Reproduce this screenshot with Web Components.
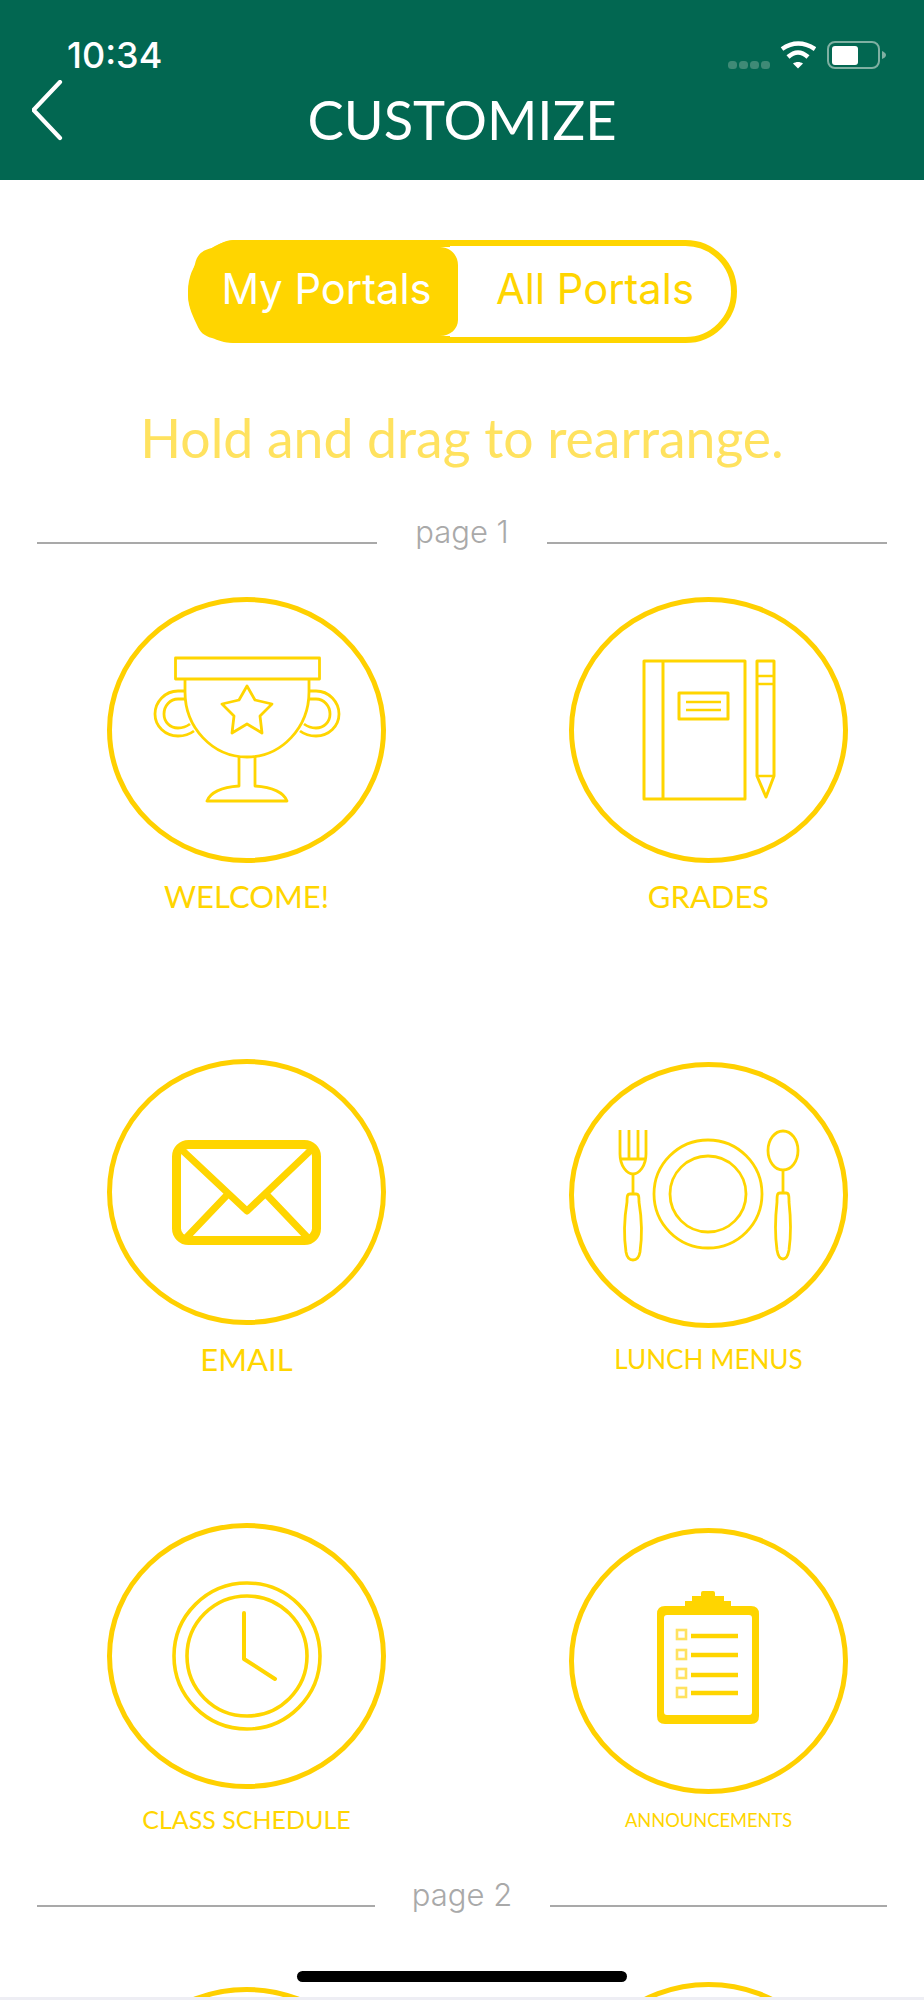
<!DOCTYPE html>
<html>
<head>
<meta charset="utf-8">
<title>Customize</title>
<style>
  html, body { margin: 0; padding: 0; background: #fff; }
  body { width: 924px; height: 2000px; overflow: hidden; position: relative; font-family: Lato, sans-serif; }
</style>
</head>
<body>
<nav-header title="CUSTOMIZE"></nav-header>
<segment-switch></segment-switch>
<hint-line>Hold and drag to rearrange.</hint-line>

<page-divider style="--top:45px" gap="170">page 1</page-divider>
<portal-grid style="--top:44px; --rows:462px 462px 355px">
  <portal-tile label="WELCOME!" size="31" icon="trophy"></portal-tile>
  <portal-tile label="GRADES" size="31" icon="notebook"></portal-tile>
  <portal-tile label="EMAIL" size="31" icon="mail" gap="17"></portal-tile>
  <portal-tile label="LUNCH MENUS" size="26.1" icon="lunch" nudge="3" gap="14"></portal-tile>
  <portal-tile label="CLASS SCHEDULE" size="25" icon="clock" nudge="2" gap="13"></portal-tile>
  <portal-tile label="ANNOUNCEMENTS" size="18.3" icon="clipboard" nudge="7" gap="9"></portal-tile>
</portal-grid>

<page-divider style="--top:0px" gap="175">page 2</page-divider>
<!-- next page only peeks in above the bottom edge -->
<portal-grid style="--top:66px; --rows:17px; overflow:hidden">
  <portal-tile nudge="5"></portal-tile>
  <portal-tile></portal-tile>
</portal-grid>

<home-bar></home-bar>

<script>
// header with the status bar inside it
class NavHeader extends HTMLElement {
  constructor() {
    super();
    this.attachShadow({ mode: 'open' });
  }
  connectedCallback() {
    this.shadowRoot.innerHTML = `
      <style>
        :host { display: block; height: 180px; background: #026751; color: #fff; box-sizing: border-box; padding: 41px 37px 0 32px; }
        .status { display: flex; align-items: center; height: 28px; padding-left: 35px; }
        .time { font: 500 36px/28px Inter, sans-serif; flex: 1; }
        .status svg { display: block; }
        .bar { display: flex; height: 62px; margin-top: 11px; }
        .back { width: 32px; height: 62px; flex: none; }
        h1 { flex: 1; margin: 0; text-align: center; font: 400 54.3px/60px Lato, sans-serif; padding: 9px 27px 0 0; white-space: nowrap; }
      </style>
      <div class="status">
        <span class="time">10:34</span>
        <svg width="42" height="28" viewBox="0 0 42 28" fill="#3f8a76"><rect x="0" y="20" width="9" height="8" rx="3.5"/><rect x="11" y="20" width="9" height="8" rx="3.5"/><rect x="22" y="20" width="9" height="8" rx="3.5"/><rect x="33" y="20" width="9" height="8" rx="3.5"/></svg>
        <svg width="36" height="28" viewBox="0 0 36 28" style="margin-left:10px">
          <g fill="none" stroke="#fff" stroke-width="4.5">
            <path d="M2 8Q18 -3 35 8"/>
            <path d="M8 16Q18 7 28 16"/>
          </g>
          <path fill="#fff" d="M18 27.5L13 22.5C16 20.5 20 20.5 23 22.5Z"/>
        </svg>
        <svg width="60" height="28" viewBox="0 0 60 28" style="margin-left:11px">
          <rect x="1" y="1" width="51" height="26" rx="7" fill="none" stroke="#7fb0a2" stroke-width="2"/>
          <rect x="5" y="5" width="26" height="19" rx="3" fill="#fff"/>
          <path d="M55 10c2 1 4 2 4 4s-2 3-4 4z" fill="#7fb0a2"/>
        </svg>
      </div>
      <div class="bar">
        <svg class="back" viewBox="0 0 32 62" fill="none" stroke="#fff" stroke-width="4.2" stroke-linecap="round" stroke-linejoin="round"><path d="M28 2L1.5 30L28 58"/></svg>
        <h1>${this.getAttribute('title')}</h1>
      </div>`;
  }
}

class SegmentSwitch extends HTMLElement {
  constructor() {
    super();
    this.attachShadow({ mode: 'open' });
  }
  connectedCallback() {
    this.shadowRoot.innerHTML = `
      <style>
        :host { display: block; width: 549px; height: 103px; margin: 60px 0 0 188px; box-sizing: border-box; border: 6px solid #ffd500; border-radius: 52px; font: 400 41.7px Inter, sans-serif; color: #ffd500; }
        .wrap { display: flex; height: 100%; position: relative; }
        .wrap svg { position: absolute; left: -6px; top: -6px; }
        span { position: relative; display: flex; align-items: center; justify-content: center; height: 100%; padding-bottom: 5px; box-sizing: border-box; }
        .on { width: 265px; color: #fff; }
        .off { flex: 1; }
      </style>
      <div class="wrap">
        <svg width="280" height="103" viewBox="0 0 280 103"><path fill="#ffd500" d="M45 0H262V7H252C262 7 270 15 270 25V80C270 89 262 96 252 96H262V103H45C36 103 30 100 24 98C16 96 12 92 9 85C6 78 0 68 0 55C0 42 5 32 7 24C9 14 15 10 24 8C30 6 36 0 45 0Z"/></svg>
        <span class="on">My Portals</span>
        <span class="off">All Portals</span>
      </div>`;
  }
}

class HintLine extends HTMLElement {
  constructor() {
    super();
    this.attachShadow({ mode: 'open' }).innerHTML = `
      <style>
        :host { display: block; margin-top: 63px; text-align: center; white-space: nowrap; font: 400 53.5px/62px Lato, sans-serif; color: #ffe25f; }
      </style>
      <slot></slot>`;
  }
}

class PageDivider extends HTMLElement {
  constructor() {
    super();
    this.attachShadow({ mode: 'open' });
  }
  connectedCallback() {
    const gap = this.getAttribute('gap');
    this.shadowRoot.innerHTML = `
      <style>
        :host { display: grid; grid-template-columns: 1fr ${gap}px 1fr; align-items: center; margin: var(--top, 0) 37px 0; height: 40px; color: #a9a9a9; font: 300 31px Inter, sans-serif; text-align: center; }
        i { display: block; height: 2px; background: #a9a9a9; margin-top: 18px; }
        span { margin-bottom: 4px; }
      </style>
      <i></i><span><slot></slot></span><i></i>`;
  }
}

class PortalGrid extends HTMLElement {
  constructor() {
    super();
    this.attachShadow({ mode: 'open' }).innerHTML = `
      <style>
        :host { display: grid; grid-template-columns: 279px 279px; grid-template-rows: var(--rows); column-gap: 183px; margin: var(--top, 0) 0 0 107px; }
      </style>
      <slot></slot>`;
  }
}

const GOLD = '#ffd500';
const ICONS = {
  trophy: `<g fill="none" stroke="${GOLD}" stroke-width="2.8" stroke-linejoin="round">
      <rect x="68.5" y="61" width="144" height="21"/>
      <path d="M78 82V95C78 130 105 160 140 160S202 130 202 95V82"/>
      <path d="M78 94H71C58 94 48 105 48 117S58 139 71 139C76 139 83 137 87 134"/>
      <path d="M79 102H71C63 102 57 109 57 117S63 131 71 131C75 131 79 130 83 127"/>
      <path d="M202 94H209C222 94 232 105 232 117S222 139 209 139C204 139 197 137 193 134"/>
      <path d="M201 102H209C217 102 223 109 223 117S217 131 209 131C205 131 201 130 197 127"/>
      <path d="M140 89L148 103L165 107L153 119L155 136L140 127L125 136L127 119L115 107L132 103Z"/>
      <path d="M132 160V189C118 190 104 194 100 204H180C176 194 162 190 148 189V160"/>
    </g>`,
  notebook: `<g fill="none" stroke="${GOLD}" stroke-width="3" stroke-linejoin="round">
      <rect x="75" y="64" width="101" height="138"/>
      <path d="M94 64V202"/>
      <rect x="110" y="96" width="49" height="26"/>
      <path d="M117 105H152M117 113H152" stroke-width="2.6"/>
      <path d="M188 64H205V179L197 200L188 179Z"/>
      <path d="M188 79H205M188 87H205M188 179H205" stroke-width="2.6"/>
    </g>`,
  mail: `<g fill="none" stroke="${GOLD}" stroke-linejoin="round">
      <rect x="69.5" y="85.5" width="140" height="96" rx="12" stroke-width="9"/>
      <path d="M75 91L140 152L204 91" stroke-width="7"/>
      <path d="M121 135L79 179M159 135L201 179" stroke-width="7"/>
    </g>`,
  lunch: `<g fill="none" stroke="${GOLD}" stroke-width="2.8" stroke-linejoin="round">
      <path d="M51 68V92C51 104 58 112 64 112S77 104 77 92V68"/>
      <path d="M60 68V97M69 68V97M51 97H77"/>
      <path d="M64 112V132"/>
      <path d="M61 132H67C70 132 70 135 70 140C73 158 73 176 71 190C70 196 67 198 64 198S58 196 57 190C55 176 55 158 58 140C58 135 58 132 61 132Z"/>
      <circle cx="139" cy="132" r="54"/>
      <circle cx="139" cy="132" r="38"/>
      <ellipse cx="214" cy="88.5" rx="15" ry="19.5"/>
      <path d="M214 108V131"/>
      <path d="M211 131H217C220 131 220 134 220 140C222 158 222 174 220 188C219 194 217 197 214 197S209 194 208 188C206 174 206 158 208 140C208 134 208 131 211 131Z"/>
    </g>`,
  clock: `<g fill="none" stroke="${GOLD}" stroke-linejoin="round" stroke-linecap="round">
      <circle cx="140" cy="133" r="73" stroke-width="3.6"/>
      <circle cx="140" cy="133" r="60" stroke-width="3.6"/>
      <path d="M137 90V136L168 156" stroke-width="4"/>
    </g>`,
  clipboard: `<path fill="${GOLD}" fill-rule="evenodd" d="M116 78V73H123V68H132V65Q132 63 134 63H144Q146 63 146 65V68H155V73H162V78H182Q190 78 190 86V188Q190 196 182 196H96Q88 196 88 188V86Q88 78 96 78ZM98 87Q95 87 95 90V184Q95 187 98 187H180Q183 187 183 184V90Q183 87 180 87Z"/>
    <path fill="none" stroke="${GOLD}" stroke-width="4.5" d="M122 108H169M122 127H169M122 147H169M122 165H169"/>
    <g fill="none" stroke="#ffe25f" stroke-width="2.6">
      <rect x="108" y="102" width="9" height="9"/><rect x="108" y="122" width="9" height="9"/><rect x="108" y="141" width="9" height="9"/><rect x="108" y="160" width="9" height="9"/>
    </g>`
};

class PortalTile extends HTMLElement {
  constructor() {
    super();
    this.attachShadow({ mode: 'open' });
  }
  connectedCallback() {
    const nudge = this.getAttribute('nudge') || 0;
    const gap = this.getAttribute('gap') || 16;
    const icon = this.getAttribute('icon');
    const label = this.getAttribute('label');
    this.shadowRoot.innerHTML = `
      <style>
        :host { display: block; padding-top: ${nudge}px; }
        svg { display: block; overflow: visible; }
        .label { margin-top: ${gap}px; text-align: center; white-space: nowrap; color: ${GOLD}; font: 400 ${this.getAttribute('size')}px/34px Lato, sans-serif; }
      </style>
      <svg width="279" height="266" viewBox="0 0 279 266">
        <ellipse cx="139.5" cy="133" rx="137" ry="130.5" fill="none" stroke="#ffd000" stroke-width="5"/>
        ${icon ? ICONS[icon] : ''}
      </svg>
      ${label ? `<div class="label">${label}</div>` : ''}`;
  }
}

class HomeBar extends HTMLElement {
  constructor() {
    super();
    this.attachShadow({ mode: 'open' }).innerHTML = `
      <style>
        :host { display: block; position: absolute; left: 0; right: 0; top: 1971px; height: 29px; }
        .pill { width: 330px; height: 11px; margin-left: 297px; background: #000; border-radius: 6px; }
        .strip { position: absolute; left: 0; right: 0; bottom: 0; height: 3px; background: #eeeef4; }
      </style>
      <div class="pill"></div>
      <div class="strip"></div>`;
  }
}

customElements.define('nav-header', NavHeader);
customElements.define('segment-switch', SegmentSwitch);
customElements.define('hint-line', HintLine);
customElements.define('page-divider', PageDivider);
customElements.define('portal-grid', PortalGrid);
customElements.define('portal-tile', PortalTile);
customElements.define('home-bar', HomeBar);
</script>
</body>
</html>
